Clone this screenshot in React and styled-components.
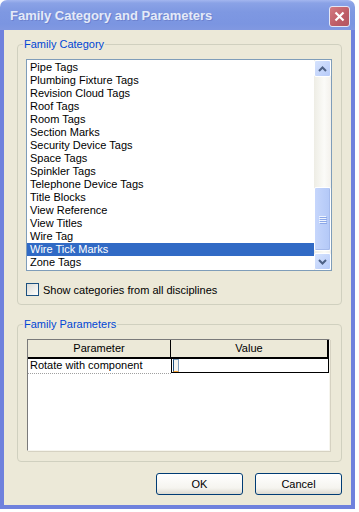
import React from "react";
import styled, { createGlobalStyle } from "styled-components";

const GlobalStyle = createGlobalStyle`
  html, body {
    margin: 0;
    padding: 0;
    background: #ffffff;
  }
  body {
    font-family: "Liberation Sans", Arial, sans-serif;
    font-size: 11px;
  }
`;

const categories = [
  "Pipe Tags",
  "Plumbing Fixture Tags",
  "Revision Cloud Tags",
  "Roof Tags",
  "Room Tags",
  "Section Marks",
  "Security Device Tags",
  "Space Tags",
  "Spinkler Tags",
  "Telephone Device Tags",
  "Title Blocks",
  "View Reference",
  "View Titles",
  "Wire Tag",
  "Wire Tick Marks",
  "Zone Tags",
];

const Window = styled.div`
  width: 355px;
  height: 509px;
  display: flex;
  flex-direction: column;
  border-radius: 7px 7px 0 0;
  overflow: hidden;
`;

const TitleBar = styled.div`
  height: 30px;
  flex: none;
  display: flex;
  align-items: center;
  justify-content: space-between;
  padding: 0 5px 0 10px;
  box-sizing: border-box;
  background: linear-gradient(#a3b6ef 0px, #8aa2e6 3px, #7e98e2 12px, #7b95e1 24px, #8198e1 30px);
`;

const Title = styled.span`
  font-family: "Liberation Sans", Arial, sans-serif;
  font-weight: bold;
  font-size: 13px;
  color: #e4eaf8;
  text-shadow: 1px 1px 0 #6c82cf;
  margin-top: 1px;
`;

const CloseButton = styled.div`
  width: 19px;
  height: 19px;
  margin-top: 2px;
  border: 1px solid #e3e7f5;
  border-radius: 3px;
  background: linear-gradient(135deg, #d47a80, #bd5c66 60%, #b35561);
  display: flex;
  align-items: center;
  justify-content: center;
`;

const Body = styled.div`
  flex: 1;
  display: flex;
  flex-direction: column;
  background: #ece9d8;
  border-left: 4px solid #6f81dd;
  border-right: 4px solid #6f81dd;
  border-bottom: 4px solid #6f81dd;
  padding: 8px 9px 0 13px;
`;

const Group = styled.fieldset`
  margin: ${(p) => p.$top || 0}px 0 0 0;
  padding: 8px 9px ${(p) => p.$bottom || 8}px ${(p) => p.$left || 8}px;
  border: 1px solid #d0d0bf;
  border-radius: 4px;
  min-width: 0;
`;

const Legend = styled.legend`
  color: #0046d5;
  font-size: 11px;
  line-height: 13px;
  padding: 0 1px;
  margin-left: ${(p) => p.$shift || -3}px;
`;

const ListBox = styled.div`
  width: 306px;
  height: 212px;
  box-sizing: border-box;
  border: 1px solid #7f9db9;
  background: #ffffff;
  display: flex;
  padding: 0;
`;

const Items = styled.div`
  flex: 1;
  padding-top: 1px;
`;

const Item = styled.div`
  height: 13px;
  line-height: 13px;
  padding-left: 3px;
  color: ${(p) => (p.$selected ? "#ffffff" : "#000000")};
  background: ${(p) => (p.$selected ? "#316ac5" : "transparent")};
  white-space: nowrap;
`;

const ScrollBar = styled.div`
  width: 17px;
  display: flex;
  flex-direction: column;
  background: linear-gradient(90deg, #eeede5, #fbfbf8 60%, #f3f1ec);
`;

const ScrollButton = styled.div`
  height: 17px;
  flex: none;
  box-sizing: border-box;
  border: 1px solid #ffffff;
  border-radius: 2px;
  background: linear-gradient(135deg, #d6e3fd, #b7cbf9);
  display: flex;
  align-items: center;
  justify-content: center;
`;

const Track = styled.div`
  flex: 1;
  display: flex;
  flex-direction: column;
  justify-content: flex-end;
  padding-bottom: 2px;
`;

const Thumb = styled.div`
  height: 64px;
  box-sizing: border-box;
  border: 1px solid #ffffff;
  border-radius: 2px;
  background: linear-gradient(90deg, #c6d6fc, #bccff9 50%, #b3c8f7);
  box-shadow: inset -1px -1px 0 #a6bbec;
  display: flex;
  flex-direction: column;
  align-items: center;
  justify-content: center;
  gap: 1px;
`;

const Grip = styled.div`
  width: 7px;
  height: 1px;
  background: #eef4fe;
  box-shadow: 1px 1px 0 #8ca8e8;
`;

const CheckRow = styled.label`
  display: flex;
  align-items: center;
  gap: 4px;
  margin-top: 12px;
  height: 13px;
  color: #000;
`;

const CheckBox = styled.span`
  width: 13px;
  height: 13px;
  box-sizing: border-box;
  border: 1px solid #1c5180;
  background: linear-gradient(135deg, #dcdcd7, #f4f4f1 70%, #ffffff);
`;

const Grid = styled.div`
  width: 303px;
  height: 112px;
  box-sizing: border-box;
  background: #ffffff;
  border-top: 1px solid #7a7a7a;
  border-left: 1px solid #7a7a7a;
  border-right: 1px solid #f6f5ee;
  border-bottom: 1px solid #f6f5ee;
  box-shadow: 1px 1px 0 #d6d2c2;
`;

const GridRow = styled.div`
  display: grid;
  grid-template-columns: 143px 1fr;
`;

const HeadCell = styled.div`
  height: 17px;
  line-height: 17px;
  text-align: center;
  background: #ece9d8;
  border-bottom: 2px solid #000000;
  border-right: ${(p) => (p.$last ? "2px solid #000" : "1px solid #000")};
  color: #000;
`;

const NameCell = styled.div`
  height: 14px;
  line-height: 13px;
  padding-left: 2px;
  border-bottom: 1px dotted #a0a0a0;
  color: #000;
  white-space: nowrap;
`;

const ValueCell = styled.div`
  height: 14px;
  box-sizing: border-box;
  border: 1px solid #000000;
  border-top: 0;
  display: flex;
  align-items: stretch;
`;

const CellCheck = styled.span`
  width: 4px;
  margin: 0 0 0 1px;
  border-top: 1px solid #7f9db9;
  border-left: 1px solid #1c5180;
  border-right: 1px solid #7f9db9;
  border-bottom: 1px solid #f7a43a;
  background: #f3f3ef;
`;

const Footer = styled.div`
  display: flex;
  justify-content: flex-end;
  gap: 12px;
  margin-top: 11px;
`;

const Button = styled.button`
  width: 87px;
  height: 22px;
  box-sizing: border-box;
  border: 1px solid #003c74;
  border-radius: 3px;
  background: linear-gradient(#ffffff, #f5f4ef 70%, #dcdad0);
  font-family: "Liberation Sans", Arial, sans-serif;
  font-size: 11px;
  color: #000;
  padding: 0;
`;

const Chevron = ({ down }) => (
  <svg width="9" height="6" viewBox="0 0 9 6">
    <path
      d={down ? "M1 1 L4.5 4.5 L8 1" : "M1 5 L4.5 1.5 L8 5"}
      fill="none"
      stroke="#4d6185"
      strokeWidth="2"
    />
  </svg>
);

const App = () => {
  return (
    <>
      <GlobalStyle />
      <Window>
        <TitleBar>
          <Title>Family Category and Parameters</Title>
          <CloseButton>
            <svg width="11" height="11" viewBox="0 0 11 11">
              <path d="M1.5 1.5 L9.5 9.5 M9.5 1.5 L1.5 9.5" stroke="#ffffff" strokeWidth="2.2" />
            </svg>
          </CloseButton>
        </TitleBar>
        <Body>
          <Group $bottom={8}>
            <Legend $shift={-3}>Family Category</Legend>
            <ListBox>
              <Items>
                {categories.map((c) => (
                  <Item key={c} $selected={c === "Wire Tick Marks"}>
                    {c}
                  </Item>
                ))}
              </Items>
              <ScrollBar>
                <ScrollButton>
                  <Chevron />
                </ScrollButton>
                <Track>
                  <Thumb>
                    <Grip />
                    <Grip />
                    <Grip />
                    <Grip />
                  </Thumb>
                </Track>
                <ScrollButton>
                  <Chevron down />
                </ScrollButton>
              </ScrollBar>
            </ListBox>
            <CheckRow>
              <CheckBox />
              Show categories from all disciplines
            </CheckRow>
          </Group>
          <Group $top={13} $left={9} $bottom={10}>
            <Legend $shift={-4}>Family Parameters</Legend>
            <Grid>
              <GridRow>
                <HeadCell>Parameter</HeadCell>
                <HeadCell $last>Value</HeadCell>
              </GridRow>
              <GridRow>
                <NameCell>Rotate with component</NameCell>
                <ValueCell>
                  <CellCheck />
                </ValueCell>
              </GridRow>
            </Grid>
          </Group>
          <Footer>
            <Button>OK</Button>
            <Button>Cancel</Button>
          </Footer>
        </Body>
      </Window>
    </>
  );
};

export default App;
